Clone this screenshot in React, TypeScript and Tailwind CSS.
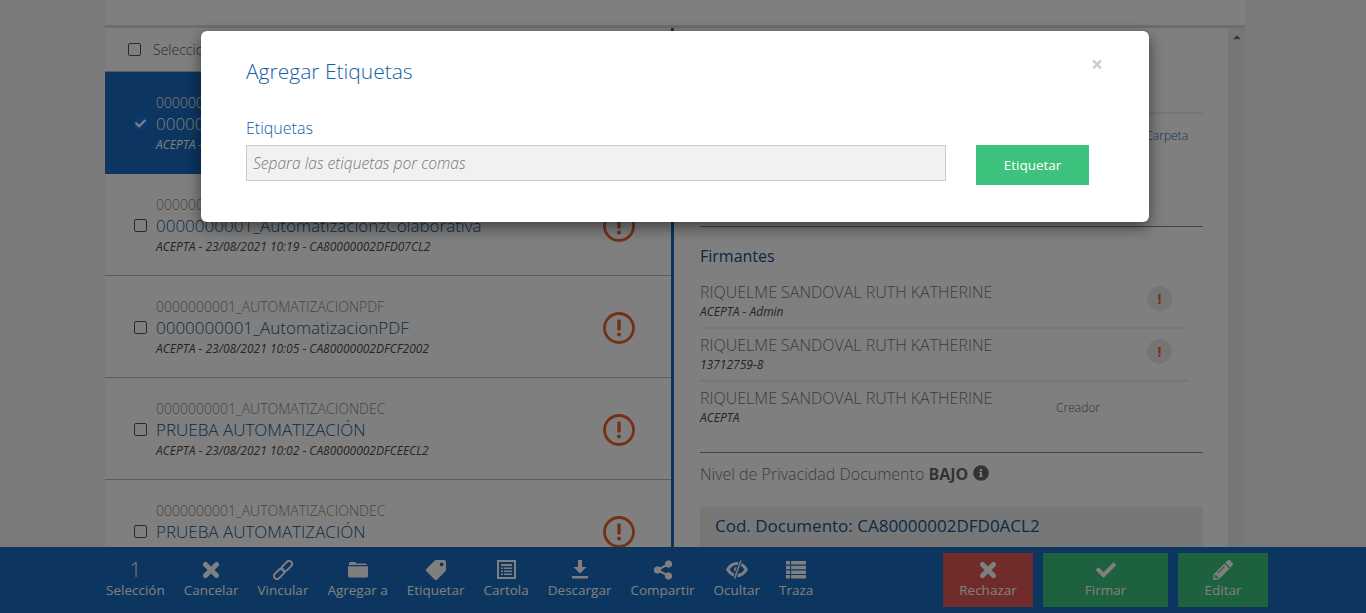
import { FaCheck, FaPencilAlt, FaInfoCircle, FaCaretUp, FaTag } from "react-icons/fa";
import type { ReactNode } from "react";

const rows = [
  { code: "0000000001_AUTOMATIZACIONZ", title: "0000000001_AutomatizacionzFirma", meta: "ACEPTA - 23/08/2021 10:25 - CA80000002DFD0ACL2", selected: true },
  { code: "0000000001_AUTOMATIZACIONZ", title: "0000000001_AutomatizacionzColaborativa", meta: "ACEPTA - 23/08/2021 10:19 - CA80000002DFD07CL2" },
  { code: "0000000001_AUTOMATIZACIONPDF", title: "0000000001_AutomatizacionPDF", meta: "ACEPTA - 23/08/2021 10:05 - CA80000002DFCF2002" },
  { code: "0000000001_AUTOMATIZACIONDEC", title: "PRUEBA AUTOMATIZACIÓN", meta: "ACEPTA - 23/08/2021 10:02 - CA80000002DFCEECL2" },
  { code: "0000000001_AUTOMATIZACIONDEC", title: "PRUEBA AUTOMATIZACIÓN", meta: "ACEPTA - 23/08/2021 09:58 - CA80000002DFCE9CL2" },
];

const signers = [
  { sub: "ACEPTA - Admin", warn: true },
  { sub: "13712759-8", warn: true },
  { sub: "ACEPTA", warn: false },
];

function CloseIcon() {
  return (
    <svg width="18" height="18" viewBox="0 0 18 18" fill="none" stroke="currentColor" strokeWidth="5" strokeLinecap="round">
      <path d="M3.500 3.500l11 11M14.500 3.500l-11 11" />
    </svg>
  );
}

function LinkIcon() {
  return (
    <svg width="20" height="20" viewBox="0 0 20 20" fill="none" stroke="currentColor" strokeWidth="2">
      <g transform="rotate(-45 10 10)">
        <rect x="-1.500" y="7" width="12" height="6" rx="3" />
        <rect x="9.500" y="7" width="12" height="6" rx="3" />
      </g>
    </svg>
  );
}

function FolderIcon() {
  return (
    <svg width="20" height="17" viewBox="0 0 20 17" fill="currentColor">
      <path d="M1 3.500V2.500A1.500 1.500 0 012.500 1H7l1.500 1.500h9A1.500 1.500 0 0119 4H1z" />
      <path d="M0 5.200h20V15a1.500 1.500 0 01-1.500 1.500h-17A1.500 1.500 0 010 15z" />
    </svg>
  );
}

function CartolaIcon() {
  return (
    <svg width="19" height="19" viewBox="0 0 19 19" fill="currentColor">
      <path fillRule="evenodd" d="M0 0h19v19H0zM2 2v15h15V2z" />
      <path d="M4 4h11v2H4zM4 7.500h2v1.500H4zM7 7.500h8v1.500H7zM4 10.500h2V12H4zM7 10.500h8V12H7zM4 13.500h2V15H4zM7 13.500h8V15H7z" />
    </svg>
  );
}

function DownloadIcon() {
  return (
    <svg width="16" height="19" viewBox="0 0 16 19" fill="currentColor">
      <path d="M6 0h4v7h4.500L8 13.500 1.500 7H6z" />
      <rect x="0" y="16" width="16" height="2.500" />
    </svg>
  );
}

function ShareIcon() {
  return (
    <svg width="20" height="20" viewBox="0 0 20 20" fill="currentColor" stroke="currentColor">
      <path d="M15.500 4L4.500 10l11 6" fill="none" strokeWidth="2" />
      <circle cx="15.500" cy="4" r="3.200" />
      <circle cx="4.500" cy="10" r="3.200" />
      <circle cx="15.500" cy="16" r="3.200" />
    </svg>
  );
}

function EyeOffIcon() {
  return (
    <svg width="22" height="19" viewBox="0 0 22 19" fill="none" stroke="currentColor">
      <path d="M1.800 9.500C4 5.500 7.500 3.500 11 3.500s7 2 9.200 6c-2.200 4-5.700 6-9.200 6s-7-2-9.200-6z" strokeWidth="3.200" />
      <circle cx="10.500" cy="9.500" r="2.500" fill="currentColor" stroke="none" />
      <path d="M15 0.500L8.500 18.500" stroke="#186ac0" strokeWidth="3.600" />
      <path d="M15 0.500L8.500 18.500" strokeWidth="1.500" />
    </svg>
  );
}

function TrazaIcon() {
  return (
    <svg width="20" height="18" viewBox="0 0 20 18" fill="currentColor">
      <path d="M0 0h4v3.500H0zM5 0h15v3.500H5zM0 4.700h4v3.500H0zM5 4.700h15v3.500H5zM0 9.400h4v3.500H0zM5 9.400h15v3.500H5zM0 14.100h4v3.500H0zM5 14.100h15v3.500H5z" />
    </svg>
  );
}

function AlertRing() {
  return (
    <svg width="32" height="32" viewBox="0 0 32 32" className="shrink-0 mt-[2px]">
      <circle cx="16" cy="16" r="14.500" fill="none" stroke="#e8622c" strokeWidth="2.800" />
      <rect x="14.300" y="7.500" width="3.400" height="11" rx="1" fill="#e8622c" />
      <circle cx="16" cy="22.500" r="2" fill="#e8622c" />
    </svg>
  );
}

function Action({ icon, label }: { icon: ReactNode; label: string }) {
  return (
    <div className="flex flex-col items-center text-white">
      <div className="h-[20px] flex items-center justify-center">{icon}</div>
      <span className="text-[13.5px] leading-[18px] mt-[1px] whitespace-nowrap">{label}</span>
    </div>
  );
}

function SideButton({ icon, label, className }: { icon: ReactNode; label: string; className: string }) {
  return (
    <div className={`h-[54px] flex flex-col items-center pt-[7px] text-white ${className}`}>
      <div className="h-[20px] flex items-center text-[20px]">{icon}</div>
      <span className="text-[13.5px] leading-[18px] mt-[1px]">{label}</span>
    </div>
  );
}

export default function App() {
  return (
    <div className="relative h-[613px] w-[1366px] overflow-hidden flex flex-col bg-[#f4f4f4] font-['Open_Sans',sans-serif] text-[#444]">
      <main className="flex-1 min-h-0 overflow-hidden ml-[105px] w-[1140px] flex flex-col bg-white">
        <div className="h-[25px] shrink-0 bg-white" />
        <div className="h-[3px] shrink-0 bg-[#dcdcdc]" />
        <div className="flex-1 min-h-0 flex">
          {/* lista de documentos */}
          <section className="w-[566px] shrink-0 overflow-hidden">
            <div className="h-[44px] flex items-center pl-[23px] gap-[12px] text-[14px] font-light text-[#555] border-b border-[#bbb]">
              <span className="w-[13px] h-[13px] border border-[#555] rounded-[2px]" />
              Seleccionar todos
            </div>
            {rows.map((row, i) => (
              <div
                key={i}
                className={`h-[102px] flex items-center pl-[29px] pr-[36px] border-b ${row.selected ? "bg-[#186ac0] text-white border-[#186ac0]" : "border-[#bbb]"}`}
              >
                {row.selected ? (
                  <span className="w-[13px] h-[13px] mt-[2px] bg-[#1673e6] flex items-center justify-center text-white text-[11px] shrink-0">
                    <FaCheck />
                  </span>
                ) : (
                  <span className="w-[13px] h-[13px] mt-[2px] border border-[#555] rounded-[2px] shrink-0" />
                )}
                <div className="ml-[9px] flex-1 min-w-0 mt-[2px]">
                  <p className={`text-[14px] leading-[18px] font-light ${row.selected ? "text-white" : "text-[#8a8a8a]"}`}>{row.code}</p>
                  <p className={`text-[17px] leading-[22px] mt-[1px] font-light ${row.selected ? "text-white" : "text-[#11568f]"}`}>{row.title}</p>
                  <p className={`text-[12px] leading-[16px] mt-[2px] italic ${row.selected ? "text-white" : "text-[#4a4a4a]"}`}>{row.meta}</p>
                </div>
                <AlertRing />
              </div>
            ))}
          </section>

          <div className="w-[3px] shrink-0 bg-[#186ac0]" />

          {/* detalle */}
          <section className="w-[554px] shrink-0 overflow-hidden pl-[26px] pr-[25px]">
            <div className="h-[86px] border-b-2 border-[#eee]" />
            <p className="h-[113px] pt-[13px] text-right pr-[15px] text-[12px] leading-[18px] text-[#1a6bb8] font-light border-b border-[#888]">Carpeta</p>
            <h3 className="text-[16px] leading-[22px] mt-[18px] text-[#124f85]">Firmantes</h3>
            <div className="mt-[9px] w-[488px]">
              {signers.map((s, i) => (
                <div key={i} className={`h-[53px] relative flex items-start ${i < 2 ? "border-b-2 border-[#eee]" : ""}`}>
                  <div className="flex-1">
                    <p className="text-[16px] leading-[22px] font-light mt-[5px] text-[#777]">RIQUELME SANDOVAL RUTH KATHERINE</p>
                    <p className="text-[12px] leading-[16px] italic mt-[1px] text-[#4a4a4a]">{s.sub}</p>
                  </div>
                  {s.warn ? (
                    <span className="w-[25px] h-[25px] rounded-full bg-[#eaeaea] text-[#e8622c] font-bold text-[14px] flex items-center justify-center mr-[16px] mt-[10px]">!</span>
                  ) : (
                    <span className="text-[12px] leading-[16px] font-light mt-[18px] mr-[88px] text-[#666]">Creador</span>
                  )}
                </div>
              ))}
            </div>
            <div className="border-t border-[#888] mt-[17px] pt-[9px] flex items-center gap-[5px] text-[16px] leading-[24px] font-light text-[#777]">
              <span>Nivel de Privacidad Documento <b className="font-bold text-[#666]">BAJO</b></span>
              <FaInfoCircle className="text-[16px] text-[#666] mt-[-3px]" />
            </div>
            <div className="mt-[21px] h-[80px] bg-[#eeeeee] px-[15px] py-[8px] text-[17px] leading-[22px] text-[#11568f]">Cod. Documento: CA80000002DFD0ACL2</div>
          </section>

          <div className="w-[17px] shrink-0 bg-[#eeeeee] flex justify-center pt-[3px] text-[#777] text-[12px]">
            <FaCaretUp />
          </div>
        </div>
      </main>

      {/* barra de acciones */}
      <footer className="h-[66px] shrink-0 bg-[#186ac0] flex items-center pl-[106px] pr-[98px]">
        <div className="flex items-start gap-[19px] pb-[2px]">
          <div className="flex flex-col items-center text-white">
            <span className="h-[20px] text-[20px] leading-[20px] font-light">1</span>
            <span className="text-[13.5px] leading-[18px] mt-[1px]">Selección</span>
          </div>
          <Action icon={<CloseIcon />} label="Cancelar" />
          <Action icon={<LinkIcon />} label="Vincular" />
          <Action icon={<FolderIcon />} label="Agregar a" />
          <Action icon={<FaTag className="text-[20px] scale-x-[-1]" />} label="Etiquetar" />
          <Action icon={<CartolaIcon />} label="Cartola" />
          <Action icon={<DownloadIcon />} label="Descargar" />
          <Action icon={<ShareIcon />} label="Compartir" />
          <Action icon={<EyeOffIcon />} label="Ocultar" />
          <Action icon={<TrazaIcon />} label="Traza" />
        </div>
        <div className="ml-auto flex gap-[10px]">
          <SideButton icon={<CloseIcon />} label="Rechazar" className="w-[90px] bg-[#de5854]" />
          <SideButton icon={<FaCheck />} label="Firmar" className="w-[125px] bg-[#3cc27c]" />
          <SideButton icon={<FaPencilAlt />} label="Editar" className="w-[90px] bg-[#3cc27c]" />
        </div>
      </footer>

      <div className="absolute inset-0 bg-black/50" />

      {/* modal */}
      <div className="absolute left-[201px] top-[31px] w-[948px] h-[191px] bg-white rounded-[6px] shadow-[0_5px_15px_rgba(0,0,0,0.5)] pl-[45px] pr-[60px] pt-[26px]">
        <span className="absolute right-[46px] top-[23px] text-[#ccc] text-[21px] leading-[21px] font-bold">×</span>
        <h2 className="text-[21px] leading-[28px] font-light text-[#1060a8]">Agregar Etiquetas</h2>
        <div className="mt-[32px] flex items-start gap-[30px]">
          <div className="w-[700px]">
            <label className="block text-[16px] leading-[22px] font-light text-[#1060a8]">Etiquetas</label>
            <input
              placeholder="Separa las etiquetas por comas"
              className="block mt-[6px] w-full h-[36px] bg-[#f1f1f1] border border-[#ccc] px-[6px] text-[15.6px] font-light italic placeholder:text-[#777] outline-none"
            />
          </div>
          <button className="w-[113px] h-[40px] mt-[28px] bg-[#3cc27c] text-white text-[13.5px]">Etiquetar</button>
        </div>
      </div>
    </div>
  );
}
